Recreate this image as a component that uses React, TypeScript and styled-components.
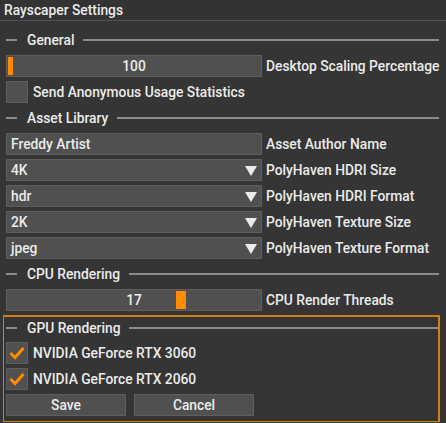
import React from "react"
import styled, { createGlobalStyle } from "styled-components"

const GlobalStyle = createGlobalStyle`
  html, body {
    margin: 0;
    padding: 0;
    background: #353535;
  }
  body {
    font-family: Roboto, "Liberation Sans", sans-serif;
    font-size: 13.8px;
    font-weight: 500;
    color: #ebebeb;
  }
`

const Window = styled.div`
  width: 446px;
  height: 423px;
  background: #353535;
  box-sizing: border-box;
  overflow: hidden;
`

const TitleBar = styled.div`
  height: 20px;
  line-height: 20px;
  padding-left: 4px;
  background: #333333;
  border-bottom: 1px solid #50505c;
`

const Content = styled.div`
  display: flex;
  flex-direction: column;
  gap: 4px;
  padding: 8px 7px 0 6px;
`

const Separator = styled.div<{ $height?: number }>`
  display: flex;
  align-items: center;
  height: ${p => p.$height ?? 22}px;

  &::before {
    content: "";
    width: 11px;
    height: 2px;
    background: #8c8c8c;
    margin-right: 10px;
  }
  &::after {
    content: "";
    flex: 1;
    height: 2px;
    background: #8c8c8c;
    margin-left: 9px;
  }
`

const Row = styled.div`
  display: flex;
  align-items: center;
  gap: 4px;
`

const Frame = styled.div<{ $center?: boolean }>`
  position: relative;
  flex-shrink: 0;
  box-sizing: border-box;
  width: 256px;
  height: 22px;
  background: #505050;
  border: 1px solid #5e5e5e;
  display: flex;
  align-items: center;
  justify-content: ${p => (p.$center ? "center" : "flex-start")};
  padding: 0 4px;
`

const Grab = styled.div`
  position: absolute;
  top: 1px;
  bottom: 1px;
  background: #ff8c00;
`

const Arrow = styled.svg`
  position: absolute;
  right: 4px;
  top: 6px;
`

const Label = styled.span`
  white-space: nowrap;
`

const CheckRow = styled.label`
  display: flex;
  align-items: center;
  gap: 5px;
`

const CheckBox = styled.div`
  flex-shrink: 0;
  box-sizing: border-box;
  width: 22px;
  height: 22px;
  background: #505050;
  border: 1px solid #5e5e5e;
  display: flex;
  align-items: center;
  justify-content: center;
`

const GpuGroup = styled.div`
  display: flex;
  flex-direction: column;
  gap: 4px;
  margin: 0 -1px 0 -3px;
  padding: 0 0 5px 2px;
  border: 1px solid #d0800f;
  border-top-width: 2px;
  border-right-width: 2px;
`

const Buttons = styled.div`
  display: flex;
  gap: 8px;
`

const Button = styled.button`
  box-sizing: border-box;
  width: 120px;
  height: 22px;
  background: #505050;
  border: 1px solid #5e5e5e;
  color: #ebebeb;
  font: inherit;
  padding: 0;
`

const Check = () => (
  <svg width="16" height="14" viewBox="0 0 16 14">
    <path d="M1.5 7 L6 11.5 L14.5 2" fill="none" stroke="#ff8c00" strokeWidth="3" />
  </svg>
)

const Combo = ({ value, label }: { value: string; label: string }) => (
  <Row>
    <Frame>
      {value}
      <Arrow width="12" height="10" viewBox="0 0 12 10">
        <polygon points="0,0 12,0 6,10" fill="#ebebeb" />
      </Arrow>
    </Frame>
    <Label>{label}</Label>
  </Row>
)

export default function App() {
  return (
    <Window>
      <GlobalStyle />
      <TitleBar>Rayscaper Settings</TitleBar>
      <Content>
        <Separator>General</Separator>
        <Row>
          <Frame $center>
            <Grab style={{ left: 1, width: 5 }} />
            100
          </Frame>
          <Label>Desktop Scaling Percentage</Label>
        </Row>
        <CheckRow>
          <CheckBox />
          Send Anonymous Usage Statistics
        </CheckRow>
        <Separator>Asset Library</Separator>
        <Row>
          <Frame>Freddy Artist</Frame>
          <Label>Asset Author Name</Label>
        </Row>
        <Combo value="4K" label="PolyHaven HDRI Size" />
        <Combo value="hdr" label="PolyHaven HDRI Format" />
        <Combo value="2K" label="PolyHaven Texture Size" />
        <Combo value="jpeg" label="PolyHaven Texture Format" />
        <Separator>CPU Rendering</Separator>
        <Row>
          <Frame $center>
            <Grab style={{ left: 169, width: 10 }} />
            17
          </Frame>
          <Label>CPU Render Threads</Label>
        </Row>
        <GpuGroup>
          <Separator $height={21}>GPU Rendering</Separator>
          <CheckRow>
            <CheckBox><Check /></CheckBox>
            NVIDIA GeForce RTX 3060
          </CheckRow>
          <CheckRow>
            <CheckBox><Check /></CheckBox>
            NVIDIA GeForce RTX 2060
          </CheckRow>
          <Buttons>
            <Button>Save</Button>
            <Button>Cancel</Button>
          </Buttons>
        </GpuGroup>
      </Content>
    </Window>
  )
}
